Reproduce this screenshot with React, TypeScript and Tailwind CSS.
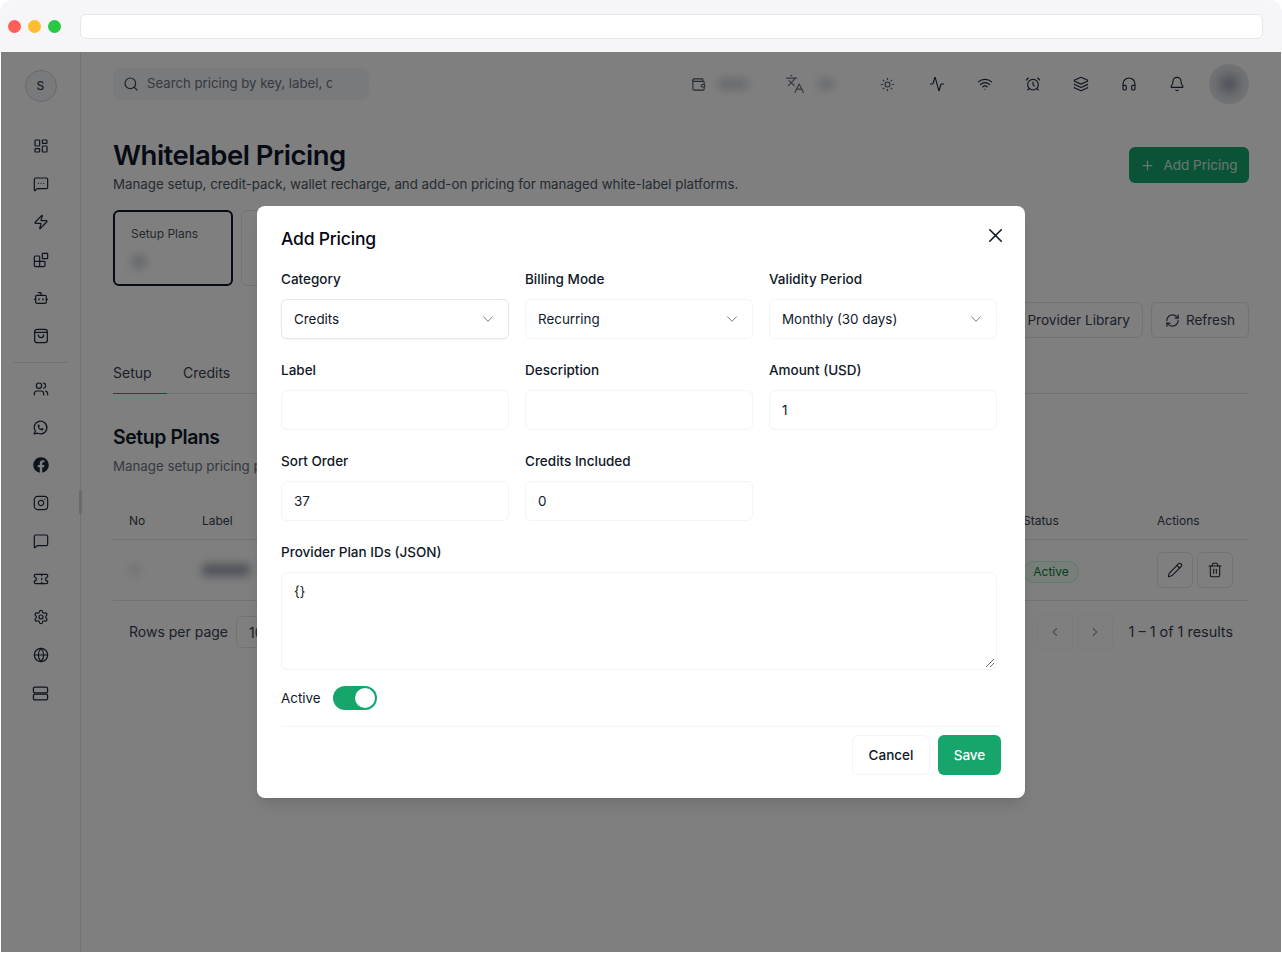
import {
  Activity, AlarmClock, Bell, Blocks, Bot, ChevronDown, ChevronLeft, ChevronRight, Globe, Headphones,
  Instagram, Languages, Layers, LayoutDashboard, MessageSquare, MessageSquareMore, Pencil, Plus, RefreshCw,
  Search, Settings, Sun, Ticket, Trash2, Users, Wallet, Wifi, X, Zap,
} from 'lucide-react'
import { FaFacebook } from 'react-icons/fa'
import { TbBrandWhatsapp } from 'react-icons/tb'

function ServerIcon() {
  return (
    <svg width="17" height="17" viewBox="0 0 24 24" fill="none" stroke="currentColor" strokeWidth="1.8">
      <rect x="2" y="3" width="20" height="8" rx="2" />
      <rect x="2" y="13" width="20" height="8" rx="2" />
    </svg>
  )
}

function BagIcon() {
  return (
    <svg width="16" height="16" viewBox="0 0 24 24" fill="none" stroke="currentColor" strokeWidth="1.9" strokeLinecap="round">
      <rect x="2.5" y="2" width="19" height="20" rx="3.5" />
      <path d="M3 6.5h18" />
      <path d="M8 10.5a4 4 0 0 0 8 0" />
    </svg>
  )
}

function NavIcon({ children }: { children: React.ReactNode }) {
  return <div className="h-[38px] flex items-center justify-center text-slate-800">{children}</div>
}

function Sidebar() {
  return (
    <aside className="relative w-[80px] shrink-0 border-r border-gray-200 flex flex-col items-stretch pt-[18px]">
      <div className="mx-auto size-8 rounded-full bg-gray-100 border border-gray-300 flex items-center justify-center text-xs font-medium text-gray-700">
        S
      </div>
      <div className="mt-[25px]">
        <NavIcon><LayoutDashboard size={16} strokeWidth={1.8} /></NavIcon>
        <NavIcon><MessageSquareMore size={16} strokeWidth={1.8} /></NavIcon>
        <NavIcon><Zap size={16} strokeWidth={1.8} /></NavIcon>
        <NavIcon><Blocks size={16} strokeWidth={1.8} /></NavIcon>
        <NavIcon><Bot size={16} strokeWidth={1.8} /></NavIcon>
        <NavIcon><BagIcon /></NavIcon>
      </div>
      <div className="mx-3 mt-[7px] mb-[7px] h-px bg-gray-200" />
      <NavIcon><Users size={16} strokeWidth={1.8} /></NavIcon>
      <NavIcon><TbBrandWhatsapp size={17} strokeWidth={1.8} /></NavIcon>
      <NavIcon><FaFacebook size={16} /></NavIcon>
      <NavIcon><Instagram size={16} strokeWidth={1.8} /></NavIcon>
      <NavIcon><MessageSquare size={16} strokeWidth={1.8} /></NavIcon>
      <NavIcon><Ticket size={16} strokeWidth={1.8} /></NavIcon>
      <NavIcon><Settings size={16} strokeWidth={1.8} /></NavIcon>
      <NavIcon><Globe size={16} strokeWidth={1.8} /></NavIcon>
      <NavIcon><ServerIcon /></NavIcon>
      <div className="absolute right-[-2px] top-[438px] w-[3px] h-6 rounded-full bg-gray-300" />
    </aside>
  )
}

function TopBar() {
  const icons = [
    <Activity size={16} strokeWidth={1.7} key="a" />,
    <Wifi size={16} strokeWidth={1.7} key="w" />,
    <AlarmClock size={16} strokeWidth={1.7} key="c" />,
    <Layers size={16} strokeWidth={1.7} key="l" />,
    <Headphones size={16} strokeWidth={1.7} key="h" />,
    <Bell size={16} strokeWidth={1.7} key="b" />,
  ]
  return (
    <div className="h-[64px] flex items-center">
      <div className="w-[256px] h-8 rounded-lg bg-gray-100 flex items-center pl-[10px] gap-[8px] text-gray-500 text-[13.2px] overflow-hidden">
        <Search size={16} strokeWidth={1.75} className="text-gray-700 shrink-0" />
        <span className="w-[185px] overflow-hidden whitespace-nowrap">Search pricing by key, label, category</span>
      </div>
      <div className="ml-auto flex items-center">
        <Wallet size={15} strokeWidth={1.7} className="text-gray-600" />
        <div className="ml-[12px] w-[30px] h-3 rounded bg-gray-300 blur-[5px]" />
        <Languages size={20} strokeWidth={1.5} className="ml-[37px] text-gray-500" />
        <div className="ml-[13px] w-[16px] h-3 rounded bg-gray-300 blur-[5px]" />
        <Sun size={15} strokeWidth={1.7} className="ml-[46px] text-gray-600" />
        <div className="ml-[18px] flex">
          {icons.map(icon => (
            <div key={icon.key} className="w-12 flex justify-center text-slate-800">{icon}</div>
          ))}
        </div>
        <div className="ml-2 size-10 rounded-full bg-gray-200 flex items-center justify-center">
          <div className="size-5 rounded-full bg-gray-400 blur-[6px]" />
        </div>
      </div>
    </div>
  )
}

function PageBehind() {
  return (
    <main className="flex-1 min-w-0 px-8">
      <TopBar />
      <div className="flex items-start justify-between mt-[20px]">
        <div>
          <h1 className="text-[27.5px] leading-[38px] tracking-[-0.5px] text-slate-900 font-semibold">Whitelabel Pricing</h1>
          <p className="text-[13.3px] leading-5 text-gray-600">
            Manage setup, credit-pack, wallet recharge, and add-on pricing for managed white-label platforms.
          </p>
        </div>
        <button className="mt-[11px] h-9 w-[120px] rounded-md bg-[#16a66c] text-white/80 text-[13.5px] flex items-center justify-center gap-2">
          <Plus size={15} /> Add Pricing
        </button>
      </div>

      <div className="mt-4 flex gap-2">
        <div className="w-[120px] h-[76px] rounded-md border-2 border-slate-900 px-[16px] pt-[14px] text-xs text-gray-600">
          Setup Plans
          <div className="mt-3 size-4 rounded-full bg-gray-300 blur-[4px]" />
        </div>
        <div className="w-[120px] h-[76px] rounded-md border border-gray-200" />
      </div>

      <div className="mt-4 flex justify-end gap-2">
        <button className="h-9 w-[140px] rounded-md border border-gray-200 text-[13.6px] text-gray-700 text-right pr-3">Provider Library</button>
        <button className="h-9 w-[98px] rounded-md border border-gray-200 text-[13.5px] text-gray-700 flex items-center justify-center gap-[6px]">
          <RefreshCw size={15} /> Refresh
        </button>
      </div>

      <div className="mt-[18px] h-[38px] border-b border-gray-200 flex text-sm text-gray-700">
        <div className="w-[54px] h-[38px] border-b border-[#16a66c] pt-[7px]">Setup</div>
        <div className="ml-4 pt-[7px]">Credits</div>
      </div>

      <h2 className="mt-[29px] text-[19.4px] leading-7 font-semibold tracking-[-0.4px] text-gray-900">Setup Plans</h2>
      <p className="mt-[5px] text-[13.3px] leading-5 text-gray-500">Manage setup pricing plans</p>

      <div className="mt-[27px] h-[37px] border-b border-gray-200 flex items-center text-xs text-gray-700 pl-4 pr-4">
        <span className="w-[73px]">No</span>
        <span>Label</span>
        <span className="ml-auto w-[134px]">Status</span>
        <span className="w-[76px] shrink-0">Actions</span>
      </div>
      <div className="h-[61px] border-b border-gray-200 flex items-center pl-4 pr-4">
        <div className="w-[73px]"><div className="w-3 h-3 rounded bg-gray-200 blur-[4px]" /></div>
        <div className="w-[48px] h-3 rounded bg-gray-400 blur-[5px]" />
        <div className="ml-auto w-[134px]">
          <span className="inline-block w-[56px] h-[22px] rounded-full border border-green-200 bg-green-50 text-xs leading-5 text-green-700 text-center">Active</span>
        </div>
        <div className="w-[76px] shrink-0 flex gap-1">
          <div className="size-9 rounded-md border border-gray-200 flex items-center justify-center text-gray-800"><Pencil size={16} strokeWidth={1.6} /></div>
          <div className="size-9 rounded-md border border-gray-200 flex items-center justify-center text-gray-800"><Trash2 size={16} strokeWidth={1.6} /></div>
        </div>
      </div>
      <div className="mt-[13px] flex items-center pl-4 pr-4 text-sm text-gray-700">
        <span>Rows per page</span>
        <div className="ml-2 w-[60px] h-8 rounded-md border border-gray-200 px-3 leading-8">10</div>
        <div className="ml-auto size-9 rounded-md border border-gray-100 flex items-center justify-center text-gray-400"><ChevronLeft size={14} /></div>
        <div className="ml-1 size-9 rounded-md border border-gray-100 flex items-center justify-center text-gray-400"><ChevronRight size={14} /></div>
        <span className="ml-4 text-[14.4px]">1 – 1 of 1 results</span>
      </div>
    </main>
  )
}

function Field({ label, value, select, focused }: { label: string; value?: string; select?: boolean; focused?: boolean }) {
  return (
    <div>
      <div className="text-[13.5px] leading-5 font-medium text-gray-900">{label}</div>
      <div
        className={`mt-[10px] h-10 rounded-md border bg-white pl-3 pr-[11px] flex items-center justify-between text-[13.4px] text-gray-900 ${
          focused ? 'border-gray-200 shadow-xs' : 'border-gray-100'
        }`}
      >
        <span>{value}</span>
        {select && <ChevronDown size={18} strokeWidth={1.25} className="text-gray-500" />}
      </div>
    </div>
  )
}

function AddPricingModal() {
  return (
    <div className="absolute left-[257px] top-[206px] w-[768px] h-[592px] rounded-lg bg-white shadow-lg pl-6 pr-6 pt-[21px]">
      <X size={23} strokeWidth={1.7} className="absolute right-[18px] top-[18px] text-gray-900" />
      <h2 className="text-[17.5px] leading-[24px] font-medium tracking-[-0.2px] text-gray-950">Add Pricing</h2>
      <div className="mt-[18px] w-[716px] grid grid-cols-3 gap-x-4 gap-y-[21px]">
        <Field label="Category" value="Credits" select focused />
        <Field label="Billing Mode" value="Recurring" select />
        <Field label="Validity Period" value="Monthly (30 days)" select />
        <Field label="Label" />
        <Field label="Description" />
        <Field label="Amount (USD)" value="1" />
        <Field label="Sort Order" value="37" />
        <Field label="Credits Included" value="0" />
      </div>
      <div className="mt-[21px] w-[716px]">
        <div className="text-[13.5px] leading-5 font-medium text-gray-900">Provider Plan IDs (JSON)</div>
        <div className="relative mt-[10px] h-[98px] rounded-md border border-gray-100 px-3 py-2 text-[13.4px] leading-5 text-gray-900">
          {'{}'}
          <svg width="10" height="10" viewBox="0 0 10 10" className="absolute right-[1px] bottom-[1px] text-gray-500" stroke="currentColor" fill="none">
            <path d="M1 9 L9 1 M5 9 L9 5" />
          </svg>
        </div>
      </div>
      <div className="mt-4 flex items-center gap-3">
        <span className="text-[13.4px] text-gray-900">Active</span>
        <div className="w-11 h-6 rounded-full bg-[#16a66c] flex items-center justify-end pr-[2px]">
          <div className="size-5 rounded-full bg-white" />
        </div>
      </div>
      <div className="mt-4 border-t border-gray-100 pt-2 flex justify-end gap-2">
        <button className="w-[78px] h-10 rounded-md border border-gray-100 bg-white text-[13.5px] font-medium text-gray-900">Cancel</button>
        <button className="w-[63px] h-10 rounded-md bg-[#16a66c] text-[13.5px] font-medium text-white">Save</button>
      </div>
    </div>
  )
}

export default function App() {
  return (
    <div className="relative w-[1282px] h-[953px] overflow-hidden bg-white font-['Inter',sans-serif]">
      <div className="h-[52px] rounded-t-xl bg-[#f6f6f8] flex items-center pl-2 pr-[19px]">
        <div className="flex gap-[7px]">
          <div className="size-[13px] rounded-full bg-[#ff5f57]" />
          <div className="size-[13px] rounded-full bg-[#febc2e]" />
          <div className="size-[13px] rounded-full bg-[#28c840]" />
        </div>
        <div className="ml-[19px] flex-1 h-[25px] rounded-md bg-white border border-gray-200" />
      </div>
      <div className="relative mx-[1px] h-[900px] overflow-hidden bg-white">
        <div className="flex h-full">
          <Sidebar />
          <PageBehind />
        </div>
        <div className="absolute inset-0 bg-black/50" />
      </div>
      <AddPricingModal />
    </div>
  )
}
